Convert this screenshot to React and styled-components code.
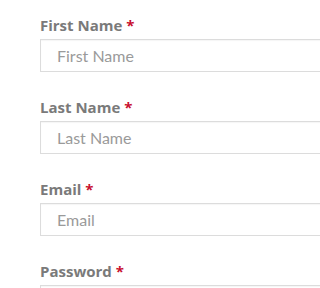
import React from "react";
import styled, { createGlobalStyle } from "styled-components";

const GlobalStyle = createGlobalStyle`
  html, body {
    margin: 0;
    padding: 0;
    background: #ffffff;
    overflow: hidden;
  }
  body {
    font-family: Lato, "Open Sans", Arial, sans-serif;
  }
`;

const Form = styled.form`
  display: flex;
  flex-direction: column;
  gap: 26px;
  width: 420px;
  padding: 16px 0 0 40px;
`;

const Field = styled.div`
  display: flex;
  flex-direction: column;
  gap: 5px;
`;

const Label = styled.label`
  font-family: "Open Sans", Lato, Arial, sans-serif;
  font-weight: 700;
  font-size: 15px;
  line-height: 18px;
  color: #7a7a7a;
`;

const Required = styled.span`
  color: #c8102e;
  margin-left: 4px;
`;

const Input = styled.input`
  box-sizing: border-box;
  height: 33px;
  width: 100%;
  padding: 0 16px;
  border: 1px solid #dcdcdc;
  border-radius: 0;
  box-shadow: inset 0 1px 1px rgba(0, 0, 0, 0.04);
  background: #fff;
  font-family: Lato, "Open Sans", Arial, sans-serif;
  font-size: 16px;
  color: #555;
  outline: none;

  &::placeholder {
    color: #9a9a9a;
  }
`;

const fields = [
  { id: "first", label: "First Name", type: "text" },
  { id: "last", label: "Last Name", type: "text" },
  { id: "email", label: "Email", type: "email" },
  { id: "password", label: "Password", type: "password" }
];

const App = () => {
  return (
    <>
      <GlobalStyle />
      <Form>
        {fields.map((field) => (
          <Field key={field.id}>
            <Label htmlFor={field.id}>
              {field.label}
              <Required>*</Required>
            </Label>
            <Input
              id={field.id}
              type={field.type}
              placeholder={field.id === "password" ? "" : field.label}
            />
          </Field>
        ))}
      </Form>
    </>
  );
};

export default App;
